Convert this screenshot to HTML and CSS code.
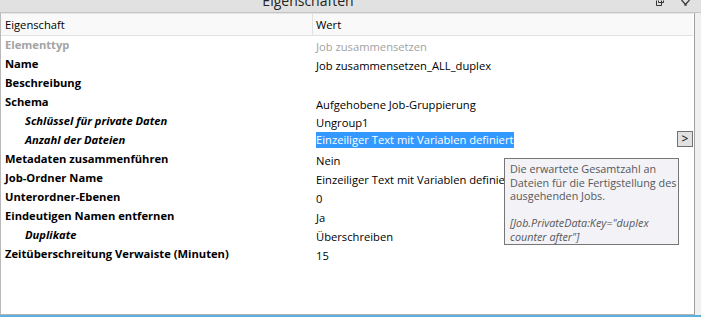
FILE: index.html
```html
<!DOCTYPE html>
<html lang="de">
<head>
<meta charset="utf-8">
<title>Eigenschaften</title>
<link rel="stylesheet" href="styles.css">
</head>
<body>
<div class="window">
  <div class="titlebar">
    <span class="title">Eigenschaften</span>
    <span class="tb-icons">
      <svg class="tb-restore" width="9" height="6" viewBox="0 0 9 6"><path d="M1.5 0.5V5.5H6.5V0.5M3.5 0.5V2.5H8.5V0.5" fill="none" stroke="#333" stroke-width="1"/></svg>
      <svg class="tb-close" width="9" height="6" viewBox="0 0 9 6"><path d="M0.5 0 L5.5 5.5 M8.5 0 L3.5 5.5" fill="none" stroke="#333" stroke-width="1.2"/></svg>
    </span>
  </div>
  <div class="body-row">
    <div class="panel">
      <div class="grid header">
        <div class="hcell">Eigenschaft</div>
        <div class="hcell hval">Wert</div>
      </div>
      <div class="rows">
        <div class="grid row"><div class="lbl disabled">Elementtyp</div><div class="val disabled">Job zusammensetzen</div></div>
        <div class="grid row"><div class="lbl">Name</div><div class="val">Job zusammensetzen_ALL_duplex</div></div>
        <div class="grid row"><div class="lbl">Beschreibung</div><div class="val"></div></div>
        <div class="grid row"><div class="lbl">Schema</div><div class="val low">Aufgehobene Job-Gruppierung</div></div>
        <div class="grid row"><div class="lbl sub">Schlüssel für private Daten</div><div class="val">Ungroup1</div></div>
        <div class="grid row"><div class="lbl sub">Anzahl der Dateien</div><div class="val sel-cell"><span class="selected">Einzeiliger Text mit Variablen definiert</span><span class="more">&gt;</span></div></div>
        <div class="grid row"><div class="lbl">Metadaten zusammenführen</div><div class="val">Nein</div></div>
        <div class="grid row"><div class="lbl">Job-Ordner Name</div><div class="val">Einzeiliger Text mit Variablen definiert</div></div>
        <div class="grid row"><div class="lbl">Unterordner-Ebenen</div><div class="val">0</div></div>
        <div class="grid row"><div class="lbl">Eindeutigen Namen entfernen</div><div class="val">Ja</div></div>
        <div class="grid row"><div class="lbl sub">Duplikate</div><div class="val">Überschreiben</div></div>
        <div class="grid row"><div class="lbl">Zeitüberschreitung Verwaiste (Minuten)</div><div class="val">15</div></div>
      </div>
      <div class="tooltip">
        <p>Die erwartete Gesamtzahl an Dateien für die Fertigstellung des ausgehenden Jobs.</p>
        <p class="tt-key">[Job.PrivateData:Key="duplex counter after"]</p>
      </div>
    </div>
    <div class="side"></div>
  </div>
  <div class="bottom-line"></div>
</div>
</body>
</html>
```
FILE: styles.css
```css
html, body {
  margin: 0;
  padding: 0;
}
body {
  width: 701px;
  height: 317px;
  overflow: hidden;
  background: #f0f0f0;
  font-family: "Open Sans", "Noto Sans", "DejaVu Sans", sans-serif;
  font-size: 11.2px;
  color: #000;
}
.window {
  display: flex;
  flex-direction: column;
  height: 317px;
}
.titlebar {
  height: 12px;
  background: #e1e1e1;
  border-bottom: 1px solid #c4c4c4;
  position: relative;
  overflow: hidden;
  display: flex;
  justify-content: center;
}
.title {
  font-size: 14px;
  line-height: 14px;
  margin-top: -6px;
  margin-left: -85px;
  color: #222;
}
.tb-icons {
  position: absolute;
  right: 0;
  top: 0;
  display: flex;
  gap: 17px;
  padding-right: 11px;
}
.body-row {
  flex: 1;
  display: flex;
  min-height: 0;
}
.panel {
  flex: 1;
  position: relative;
  background: #fff;
  border-left: 1px solid #b9b9b9;
  border-right: 1px solid #a0a0a0;
  border-bottom: 1px solid #b4b4b4;
}
.side {
  width: 6px;
  background: #f0f0f0;
}
.grid {
  display: grid;
  grid-template-columns: 311px 1fr;
}
.header {
  height: 21px;
  background: #f9f9f9;
  border-top: 1px solid #e6e6e6;
  border-bottom: 1px solid #e2e2e2;
  margin-right: 1px;
}
.hcell {
  padding-left: 4px;
  line-height: 21px;
  color: #000;
}
.hval {
  border-left: 1px solid #e2e2e2;
  padding-left: 3px;
}
.row {
  height: 19px;
}
.lbl {
  font-weight: 700;
  padding-left: 4px;
  line-height: 18px;
  white-space: nowrap;
}
.lbl.sub {
  font-style: italic;
  padding-left: 24px;
}
.val {
  padding-left: 4px;
  line-height: 18px;
  padding-top: 2px;
  white-space: nowrap;
  overflow: hidden;
}
.val.low {
  padding-top: 3px;
}
.disabled {
  color: #a3a3a3;
}
.sel-cell {
  display: flex;
  align-items: flex-start;
  padding-top: 0;
  padding-left: 4px;
}
.selected {
  background: #3399ff;
  color: #fff;
  line-height: 16px;
  height: 16px;
  padding: 0 1px 0 0;
  margin-top: 1px;
}
.more {
  margin-left: auto;
  margin-right: 1px;
  width: 14px;
  height: 14px;
  border: 1px solid #707070;
  background: #e1e1e1;
  text-align: center;
  line-height: 14px;
  font-size: 12px;
  color: #000;
}
.tooltip {
  position: absolute;
  left: 503px;
  top: 145px;
  width: 168px;
  padding: 3px 0 1px 5px;
  background: #f2f2f7;
  border: 1px solid #767676;
  color: #575757;
  font-size: 10.8px;
  line-height: 13.5px;
}
.tooltip p {
  margin: 0;
}
.tooltip .tt-key {
  font-style: italic;
  margin-top: 13.5px;
}
.bottom-line {
  height: 2px;
  background: #5ab1dd;
}
```
